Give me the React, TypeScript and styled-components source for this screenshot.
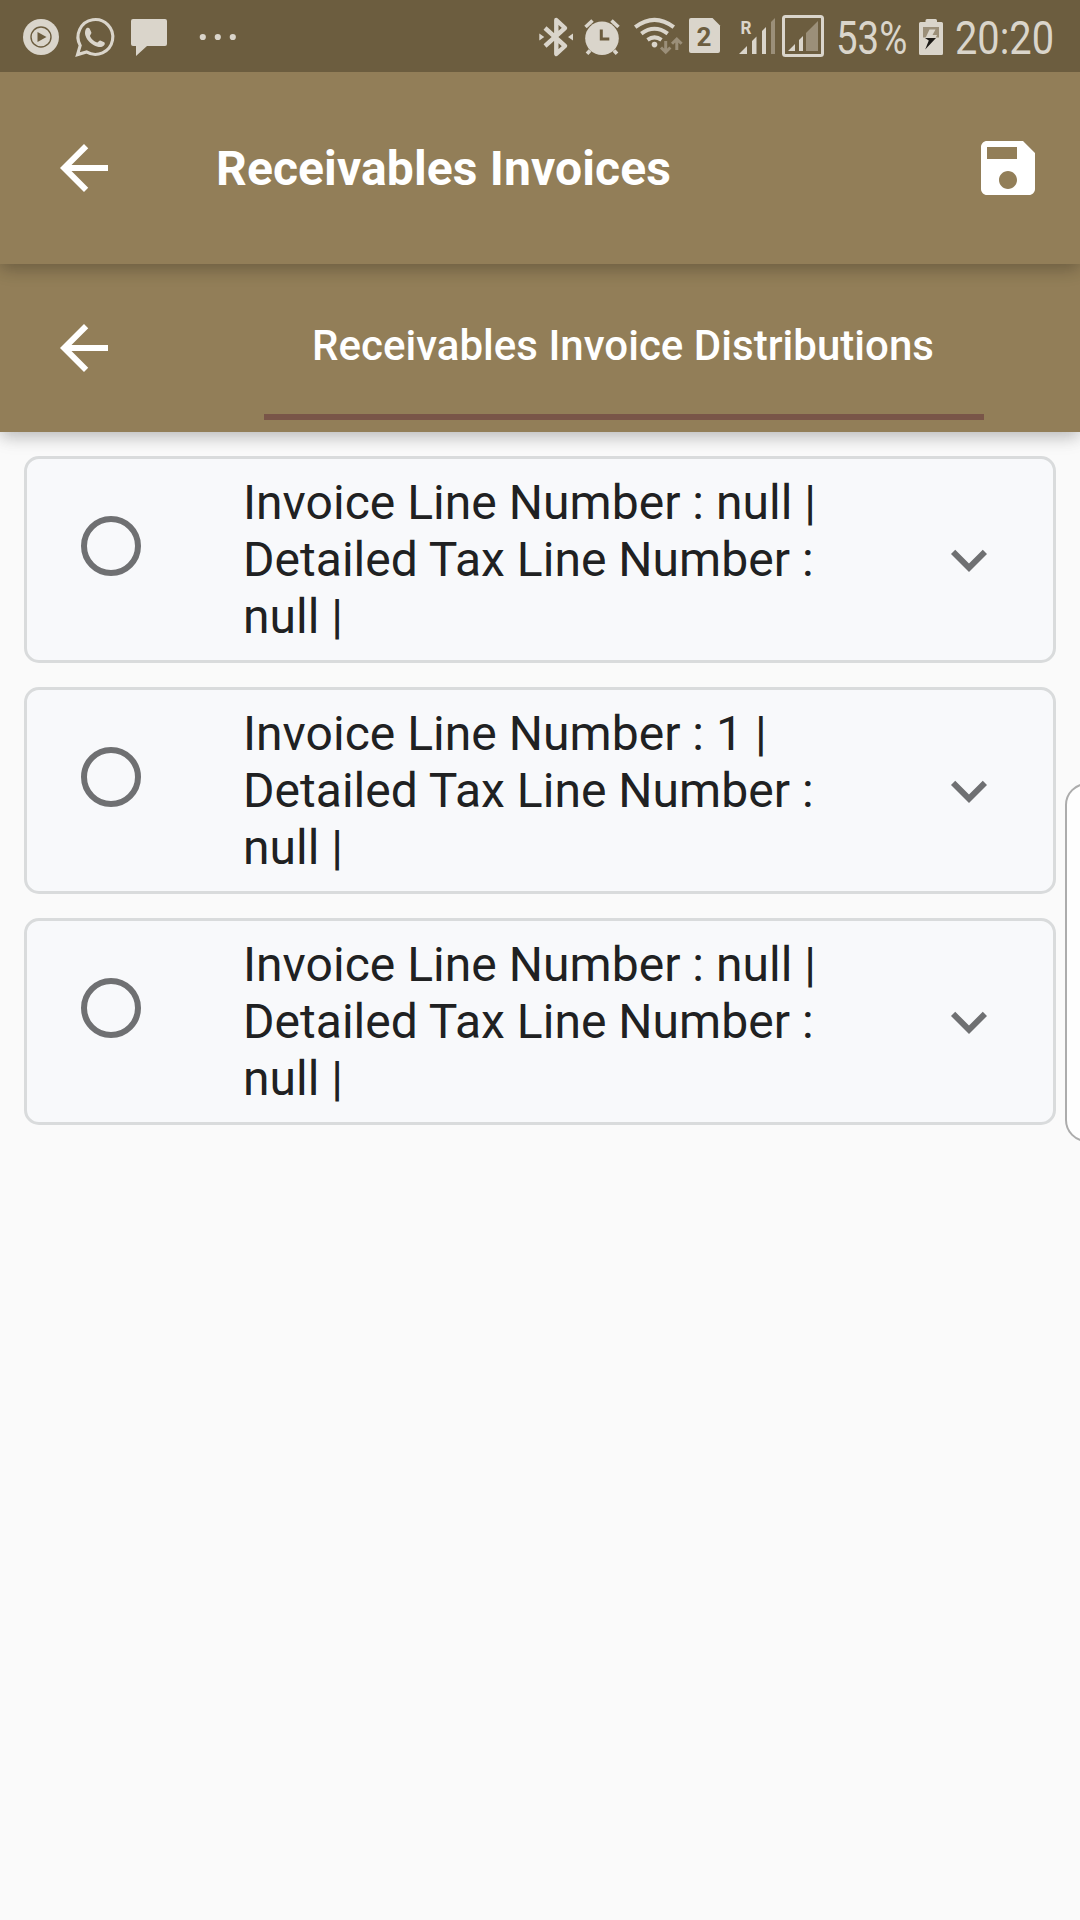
import React from "react";
import styled, { createGlobalStyle } from "styled-components";

const GlobalStyle = createGlobalStyle`
  *, *::before, *::after { box-sizing: border-box; }
  html, body { margin: 0; padding: 0; background: #fafafa; }
  body { font-family: Roboto, "Noto Sans", sans-serif; }
`;

const LIGHT = "#dad5cb";
const DIM = "#9b8f79";
const DARK = "#6c5d3f";

const Screen = styled.div`
  position: relative;
  display: flex;
  flex-direction: column;
  width: 1080px;
  height: 1920px;
  overflow: hidden;
  background: #fafafa;
`;

const StatusBar = styled.header`
  position: relative;
  z-index: 3;
  display: flex;
  justify-content: space-between;
  flex: none;
  height: 72px;
  padding: 0 26px 0 21px;
  background: ${DARK};
`;

const StatusGroup = styled.div`
  display: flex;
  height: 72px;
`;

const StatusIcon = styled.svg`
  display: block;
  flex: none;
  height: 72px;
`;

const StatusText = styled.div<{ $width: number; $gap: number; $scale: number }>`
  flex: none;
  width: ${(p) => p.$width}px;
  margin-left: ${(p) => p.$gap}px;
  padding-top: 11px;
  font-size: 46px;
  line-height: 54px;
  color: ${LIGHT};
  white-space: nowrap;
  transform: scaleX(${(p) => p.$scale});
  transform-origin: 0 0;
`;

const AppBar = styled.div`
  position: relative;
  z-index: 2;
  display: flex;
  align-items: center;
  flex: none;
  height: 192px;
  padding: 0 36px 0 48px;
  background: #927e58;
  box-shadow: 0 6px 14px -1px rgba(0, 0, 0, 0.16), 0 4px 20px 0 rgba(0, 0, 0, 0.12);
`;

const TabBar = styled(AppBar)`
  z-index: 1;
  height: 168px;
  padding: 0 96px 0 48px;
`;

const IconButton = styled.button`
  display: block;
  flex: none;
  width: 72px;
  height: 72px;
  padding: 0;
  border: 0;
  background: none;
  color: #fff;
  svg { display: block; }
`;

const Title = styled.h1`
  flex: 1;
  margin: 0 0 0 96px;
  font-size: 48px;
  line-height: 57px;
  font-weight: 700;
  letter-spacing: 0.13px;
  color: #fff;
  white-space: nowrap;
`;

const Tab = styled.div`
  display: flex;
  align-items: center;
  justify-content: center;
  width: 720px;
  height: 144px;
  margin-left: auto;
  padding: 1px 2px 0 0;
  border-bottom: 6px solid #795548;
  font-size: 42px;
  font-weight: 500;
  letter-spacing: 0.03px;
  color: #fff;
  white-space: nowrap;
`;

const List = styled.main`
  display: flex;
  flex-direction: column;
  gap: 24px;
  padding: 24px;
`;

const Card = styled.article`
  display: flex;
  align-items: center;
  height: 207px;
  padding: 0 48px 0 54px;
  border: 3px solid #d9dbdc;
  border-radius: 15px;
  background: #f8f9fb;
`;

const Radio = styled.span`
  flex: none;
  width: 60px;
  height: 60px;
  margin-bottom: 27px;
  border: 6px solid #6f7072;
  border-radius: 50%;
`;

const CardText = styled.p`
  flex: 1;
  margin: 0 0 0 102px;
  font-size: 48px;
  line-height: 57px;
  letter-spacing: 0.03px;
  color: #202122;
`;

const Line = styled.span`
  display: block;
  white-space: nowrap;
`;

const Expand = styled(IconButton)`
  color: #6f7072;
`;

const EdgeHandle = styled.aside`
  position: absolute;
  z-index: 4;
  top: 783px;
  right: -30px;
  width: 45px;
  height: 359px;
  border: 2px solid #acacac;
  border-radius: 22px;
  background: #fefefe;
`;

const ArrowBack = () => (
  <svg width="72" height="72" viewBox="0 0 24 24" fill="currentColor">
    <path d="M20 11H7.83l5.59-5.59L12 4l-8 8 8 8 1.41-1.41L7.83 13H20v-2z" />
  </svg>
);

const Save = () => (
  <svg width="72" height="72" viewBox="0 0 24 24" fill="currentColor">
    <path d="M17 3H5c-1.11 0-2 .9-2 2v14c0 1.1.89 2 2 2h14c1.1 0 2-.9 2-2V7l-4-4zm-5 16c-1.66 0-3-1.34-3-3s1.34-3 3-3 3 1.34 3 3-1.34 3-3 3zm3-10H5V5h10v4z" />
  </svg>
);

const ExpandMore = () => (
  <svg width="72" height="72" viewBox="0 0 24 24" fill="currentColor">
    <path d="M16.59 8.59L12 13.17 7.41 8.59 6 10l6 6 6-6z" />
  </svg>
);

const PlayDisc = () => (
  <StatusIcon width="50" viewBox="21 0 50 72">
    <circle cx="41" cy="37" r="18" fill={LIGHT} />
    <circle cx="41" cy="37" r="10" fill="none" stroke={DARK} strokeWidth="1.4" />
    <path d="M37.5 32v10l9-5z" fill={DARK} />
  </StatusIcon>
);

const WhatsApp = () => (
  <StatusIcon width="56" viewBox="71 0 56 72">
    <path
      d="M77.5 54.6l2.7-9.2a17.4 17.4 0 1 1 6.3 6.5z"
      fill="none"
      stroke={LIGHT}
      strokeWidth="3.1"
      strokeLinejoin="miter"
    />
    <path
      d="M87.2 27.8c1-.4 2-.1 2.5.9l1.7 3.9c.4 1-1.4 2.6-1.5 3.3 1.5 3.3 4 5.4 7.2 6.6.9 0 2.1-2.2 3.2-2.1l3.9 1.9c.7.4.8 1.5.3 2.4-1.4 2.3-4.3 2.7-6.8 2-6.2-1.8-10.3-5.6-12.2-10.900-1-3-.4-6.8 1.700-8z"
      fill={LIGHT}
    />
  </StatusIcon>
);

const Message = () => (
  <StatusIcon width="60" viewBox="127 0 60 72">
    <path d="M133 19h32q2 0 2 2v23q0 2-2 2h-18l-11 10V46h-3q-2 0-2-2V21q0-2 2-2z" fill={LIGHT} />
  </StatusIcon>
);

const More = () => (
  <StatusIcon width="60" viewBox="187 0 60 72">
    <circle cx="202.8" cy="37" r="3.1" fill={LIGHT} />
    <circle cx="217.8" cy="37" r="3.1" fill={LIGHT} />
    <circle cx="232.8" cy="37" r="3.1" fill={LIGHT} />
  </StatusIcon>
);

const Bluetooth = () => (
  <StatusIcon width="42" viewBox="536 0 42 72">
    <path
      d="M545 28l20 18-8.7 8V20l8.700 8-20 18"
      fill="none"
      stroke={LIGHT}
      strokeWidth="4.4"
      strokeLinejoin="round"
    />
    <path d="M539.3 33.5l5 3.500-5 3.500zM573 33.500v7l-5-3.500z" fill={LIGHT} />
  </StatusIcon>
);

const Alarm = () => (
  <StatusIcon width="50" viewBox="578 0 50 72">
    <circle cx="602" cy="38.3" r="16.8" fill={LIGHT} />
    <path
      d="M585.5 27l7-6.500M618.5 27l-7-6.500M590 50.500l-3 3.300M614 50.500l3 3.300"
      stroke={LIGHT}
      strokeWidth="3.6"
    />
    <path d="M601.3 29.500V39h8" fill="none" stroke={DARK} strokeWidth="3" />
  </StatusIcon>
);

const Wifi = () => (
  <StatusIcon width="56" viewBox="628 0 56 72">
    <g fill="none" stroke={LIGHT} strokeWidth="4">
      <path d="M635.2 27.200q19.300-14.600 38.600 0" />
      <path d="M641.3 33.700q13.200-9.800 26.400 0" />
      <path d="M647.5 39.800q7-4.800 14 0" />
    </g>
    <circle cx="654.5" cy="44.6" r="2.8" fill={LIGHT} />
    <path
      d="M665.7 41v11M661 47.500l4.700 4.700 4.700-4.700M676.8 50V39.500M672 43.700l4.800-4.700 4.800 4.700"
      fill="none"
      stroke={DIM}
      strokeWidth="3"
    />
  </StatusIcon>
);

const SimTwo = () => (
  <StatusIcon width="48" viewBox="684 0 48 72">
    <path d="M691 18h21.500l7.500 7.500V51q0 2-2 2h-27q-2 0-2-2V20q0-2 2-2z" fill={LIGHT} />
    <text x="704" y="45.5" textAnchor="middle" fontFamily="Roboto" fontWeight="700" fontSize="26" fill={DARK}>
      2
    </text>
  </StatusIcon>
);

const RoamingSignal = () => (
  <StatusIcon width="46" viewBox="732 0 46 72">
    <text x="740.5" y="33.5" fontFamily="Roboto" fontWeight="700" fontSize="18" textLength="11" lengthAdjust="spacingAndGlyphs" fill={LIGHT}>
      R
    </text>
    <path d="M739 54l8-8v8zM752 54V41l4.500-4.500V54zM762 54V31l4-4v27z" fill={LIGHT} />
    <path d="M771 54V22l4-4v36z" fill={DIM} />
  </StatusIcon>
);

const BoxedSignal = () => (
  <StatusIcon width="50" viewBox="778 0 50 72">
    <rect x="783.5" y="16.5" width="39" height="39" rx="2" fill="none" stroke={LIGHT} strokeWidth="3" />
    <path d="M788 51l7-7v7zM799 51V40l4-4v15z" fill={LIGHT} />
    <path d="M806 51V33l12-12v30z" fill={DIM} />
  </StatusIcon>
);

const Battery = () => (
  <StatusIcon width="36" viewBox="913 0 36 72">
    <path d="M925.5 22v-1.500q0-1.500 1.500-1.500h8.500q1.500 0 1.500 1.500V22h4.500q1.500 0 1.500 1.500v30q0 1.500-1.500 1.500h-21q-1.500 0-1.500-1.500v-30q0-1.500 1.500-1.500z" fill={LIGHT} />
    <path d="M923 27h16v10.500h-16z" fill={DIM} />
    <path d="M929.5 29.500h6l-3 5.500h4.500l-1.500 3h-10z" fill={LIGHT} />
    <path d="M925 38h11l-10.800 11.500 3.600-9z" fill="#1c1a17" />
  </StatusIcon>
);

const invoices = [{ line: "null" }, { line: "1" }, { line: "null" }];

export default function App() {
  return (
    <>
      <GlobalStyle />
      <Screen>
        <StatusBar>
          <StatusGroup>
            <PlayDisc />
            <WhatsApp />
            <Message />
            <More />
          </StatusGroup>
          <StatusGroup>
            <Bluetooth />
            <Alarm />
            <Wifi />
            <SimTwo />
            <RoamingSignal />
            <BoxedSignal />
            <StatusText $width={77} $gap={8} $scale={0.835}>53%</StatusText>
            <Battery />
            <StatusText $width={99} $gap={6} $scale={0.865}>20:20</StatusText>
          </StatusGroup>
        </StatusBar>
        <AppBar>
          <IconButton aria-label="Back"><ArrowBack /></IconButton>
          <Title>Receivables Invoices</Title>
          <IconButton aria-label="Save"><Save /></IconButton>
        </AppBar>
        <TabBar>
          <IconButton aria-label="Back"><ArrowBack /></IconButton>
          <Tab>Receivables Invoice Distributions</Tab>
        </TabBar>
        <List>
          {invoices.map((invoice, i) => (
            <Card key={i}>
              <Radio />
              <CardText>
                <Line>Invoice Line Number : {invoice.line} |</Line>
                <Line>Detailed Tax Line Number :</Line>
                <Line>null |</Line>
              </CardText>
              <Expand aria-label="Expand"><ExpandMore /></Expand>
            </Card>
          ))}
        </List>
        <EdgeHandle />
      </Screen>
    </>
  );
}
